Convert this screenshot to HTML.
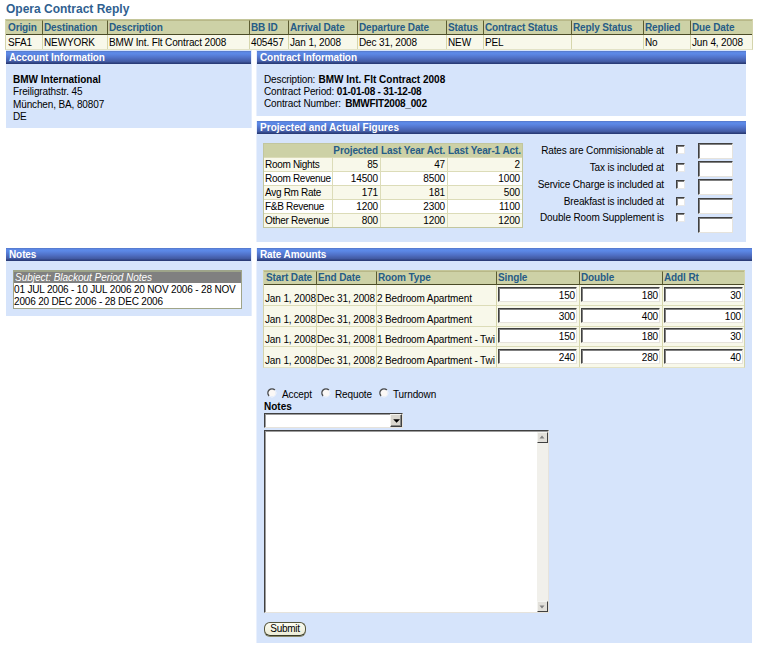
<!DOCTYPE html>
<html><head><meta charset="utf-8">
<style>
html,body{margin:0;padding:0;background:#fff;}
body{width:760px;height:651px;overflow:hidden;position:relative;font-family:"Liberation Sans",Arial,sans-serif;font-size:10px;color:#000;letter-spacing:-0.13px}
.abs{position:absolute;}
#title{left:6px;top:2px;font-size:12px;color:#305f90;white-space:nowrap;line-height:15px;font-weight:bold}
table{border-collapse:separate;border-spacing:0;font-size:10px;}
.ot{position:absolute;table-layout:fixed;border:1px solid #d4d4ac;border-top-color:#c4c69a;border-bottom-color:#e2e2c6}
.ot th{letter-spacing:-0.12px;background:#cdd1a6;color:#265c86;font-weight:bold;text-align:left;padding:0 0 0 1px;border-left:1px solid #5c5c30;border-bottom:1px solid #4a4a26;border-top:1px solid #b8b888;height:13px;line-height:13px;white-space:nowrap;overflow:hidden;box-sizing:content-box}
.ot th:first-child{border-left:0;padding-left:2px}
.ot td{background:#f8f8ea;padding:1px 0 0 1px;border-left:1px solid #d6d6ac;height:13px;line-height:13px;white-space:nowrap;overflow:hidden}
.ot td:first-child{border-left:0;padding-left:2px}
.hd{position:absolute;height:13px;line-height:13px;color:#fff;font-weight:bold;font-size:10px;padding-left:3px;box-sizing:border-box;white-space:nowrap;
background:linear-gradient(#5577c8 0,#5d8bea 14%,#5a84e0 28%,#4f6fc4 55%,#41589f 84%,#2a3c78 93%,#2a3c78 100%);}
.pn{position:absolute;background:#d6e4fb;}
.t{position:absolute;white-space:nowrap;line-height:12px}
b,th,.hd,#title{font-weight:bold;letter-spacing:0}
.hd{letter-spacing:-0.1px}
.inp{position:absolute;box-sizing:border-box;background:#fff;border:1px solid;border-color:#404040 #e6e3dc #e6e3dc #404040;box-shadow:inset 1px 1px 0 #808080;}
.rin{font-size:10px;text-align:right;padding-right:1px;padding-top:1px;line-height:13px;}
.cb{position:absolute;box-sizing:border-box;width:9px;height:9px;background:#fff;border:1px solid;border-color:#404040 #e8e8e8 #e8e8e8 #404040;box-shadow:inset 1px 1px 0 #808080}
.rd{position:absolute;box-sizing:border-box;width:7px;height:7px;border-radius:50%;background:#fff;border:1px solid;border-color:#606060 #e0e0e0 #e0e0e0 #606060;}

.r{text-align:right}
.pt{position:absolute;table-layout:fixed;border:1px solid #c2c69e;background:#f8f8ea}
.pt th{letter-spacing:-0.1px;background:#cdd1a6;color:#265c86;font-weight:bold;text-align:right;padding:0 2px 0 0;height:13px;line-height:13px;white-space:nowrap;border-left:1px solid #cdd1a6}
.pt td{padding:1px 2px 0 0;height:12px;line-height:12px;text-align:right;border-top:1px solid #dcdcb8;border-left:1px solid #dcdcb8;white-space:nowrap}
.pt td.l{text-align:left;padding:1px 0 0 1px;border-left:0;letter-spacing:-0.3px}
.pt tr.a td{background:#f8f8ea}
.pt tr.b td{background:#fff}
.rt th{height:12px;line-height:12px}
.rt td{box-sizing:border-box;height:21px;line-height:12px;vertical-align:bottom;padding:0 0 0 0;border-top:1px solid #dcdcb8;overflow:visible}
.rt td:first-child{padding-left:1px}
.rt tr.s td{height:20px}
.rt tr:nth-child(2) td{border-top:0}
.rt tr:nth-child(4) td.i .inp{top:1px}
.rt td.i{padding:0;vertical-align:top;position:relative}
.rt td.i .inp{position:absolute;left:1px;top:2px;width:79px;height:15px;}
.sb{width:11px;height:11px;box-sizing:border-box;background:#e2e0da;border:1px solid;border-color:#f4f4f0 #404040 #404040 #f4f4f0;}
</style></head><body>
<div id="title" class="abs">Opera Contract Reply</div>

<table class="ot" style="left:5px;top:19px;width:748px">
<colgroup><col style="width:36px"><col style="width:65px"><col style="width:142px"><col style="width:39px"><col style="width:69px"><col style="width:89px"><col style="width:37px"><col style="width:88px"><col style="width:72px"><col style="width:47px"><col></colgroup>
<tr><th>Origin</th><th>Destination</th><th>Description</th><th>BB ID</th><th>Arrival Date</th><th>Departure Date</th><th>Status</th><th>Contract Status</th><th>Reply Status</th><th>Replied</th><th>Due Date</th></tr>
<tr><td>SFA1</td><td>NEWYORK</td><td>BMW Int. Flt Contract 2008</td><td>405457</td><td>Jan 1, 2008</td><td>Dec 31, 2008</td><td>NEW</td><td>PEL</td><td></td><td>No</td><td>Jun 4, 2008</td></tr>
</table>

<!-- Account Information -->
<div class="pn" style="left:6px;top:50px;width:245px;height:78px"></div>
<div class="hd" style="left:6px;top:51px;width:245px">Account Information</div>
<div class="t" style="left:13px;top:74px"><b>BMW International</b></div>
<div class="t" style="left:13px;top:86px">Freiligrathstr. 45</div>
<div class="t" style="left:13px;top:99px">München, BA, 80807</div>
<div class="t" style="left:13px;top:111px">DE</div>

<div class="abs" style="left:256px;top:50px;width:1px;height:66px;background:#e9f0fd"></div><div class="abs" style="left:256px;top:121px;width:1px;height:121px;background:#e9f0fd"></div><div class="abs" style="left:256px;top:248px;width:1px;height:395px;background:#e9f0fd"></div>
<div class="abs" style="left:251px;top:50px;width:1px;height:78px;background:#e4edfc"></div><div class="abs" style="left:251px;top:248px;width:1px;height:68px;background:#e4edfc"></div>
<!-- Contract Information -->
<div class="pn" style="left:257px;top:50px;width:489px;height:66px"></div>
<div class="hd" style="left:257px;top:51px;width:489px">Contract Information</div>
<div class="t" style="left:264px;top:74px">Description:&nbsp; <b style="margin-left:-2px">BMW Int. Flt Contract 2008</b></div>
<div class="t" style="left:264px;top:86px">Contract Period: <b style="letter-spacing:-0.23px">01-01-08 - 31-12-08</b></div>
<div class="t" style="left:264px;top:98px">Contract Number:&nbsp; <b style="letter-spacing:-0.2px;margin-left:-1px">BMWFIT2008_002</b></div>

<!-- Projected -->
<div class="pn" style="left:257px;top:121px;width:489px;height:121px"></div>
<div class="hd" style="left:257px;top:121px;width:489px;letter-spacing:0.035px">Projected and Actual Figures</div>
<table class="pt" style="left:263px;top:143px;width:260px">
<colgroup><col style="width:68px"><col style="width:48px"><col style="width:67px"><col></colgroup>
<tr><th></th><th>Projected</th><th>Last Year Act.</th><th>Last Year-1 Act.</th></tr>
<tr class="a"><td class="l">Room Nights</td><td>85</td><td>47</td><td>2</td></tr>
<tr class="b"><td class="l">Room Revenue</td><td>14500</td><td>8500</td><td>1000</td></tr>
<tr class="a"><td class="l">Avg Rm Rate</td><td>171</td><td>181</td><td>500</td></tr>
<tr class="b"><td class="l">F&amp;B Revenue</td><td>1200</td><td>2300</td><td>1100</td></tr>
<tr class="a"><td class="l">Other Revenue</td><td>800</td><td>1200</td><td>1200</td></tr>
</table>
<div class="t r" style="left:530px;width:134px;top:145px">Rates are Commisionable at</div>
<div class="t r" style="left:530px;width:134px;top:162px">Tax is included at</div>
<div class="t r" style="left:530px;width:134px;top:179px">Service Charge is included at</div>
<div class="t r" style="left:530px;width:134px;top:196px">Breakfast is included at</div>
<div class="t r" style="left:530px;width:134px;top:212px">Double Room Supplement is</div>
<div class="cb" style="left:676px;top:145px"></div>
<div class="cb" style="left:676px;top:163px"></div>
<div class="cb" style="left:676px;top:180px"></div>
<div class="cb" style="left:676px;top:197px"></div>
<div class="cb" style="left:676px;top:213px"></div>
<div class="inp" style="left:698px;top:143px;width:35px;height:16px"></div>
<div class="inp" style="left:698px;top:161px;width:35px;height:16px"></div>
<div class="inp" style="left:698px;top:179px;width:35px;height:16px"></div>
<div class="inp" style="left:698px;top:198px;width:35px;height:16px"></div>
<div class="inp" style="left:698px;top:217px;width:35px;height:16px"></div>

<!-- Notes -->
<div class="pn" style="left:6px;top:248px;width:245px;height:68px"></div>
<div class="hd" style="left:6px;top:248px;width:245px">Notes</div>
<div class="abs" style="left:13px;top:270px;width:229px;height:39px;box-sizing:border-box;border:1px solid #a0a488;border-top:2px solid #9ea48a;background:#fff;line-height:12px">
<div style="background:#808080;color:#fff;font-style:italic;height:11px;line-height:11px;padding-left:1px;white-space:nowrap;letter-spacing:-0.03px">Subject: Blackout Period Notes</div>
<div style="padding-left:0px;padding-top:1px;line-height:12px;letter-spacing:-0.17px">01 JUL 2006 - 10 JUL 2006 20 NOV 2006 - 28 NOV<br>2006 20 DEC 2006 - 28 DEC 2006</div>
</div>

<!-- Rate amounts -->
<div class="pn" style="left:257px;top:248px;width:495px;height:395px"></div>
<div class="hd" style="left:257px;top:248px;width:495px">Rate Amounts</div>
<table class="ot rt" style="left:263px;top:270px;width:482px">
<colgroup><col style="width:52px"><col style="width:60px"><col style="width:120px"><col style="width:83px"><col style="width:83px"><col></colgroup>
<tr><th>Start Date</th><th>End Date</th><th>Room Type</th><th>Single</th><th>Double</th><th>Addl Rt</th></tr>
<tr class="s"><td>Jan 1, 2008</td><td>Dec 31, 2008</td><td>2 Bedroom Apartment</td><td class="i"><div class="inp rin">150</div></td><td class="i"><div class="inp rin">180</div></td><td class="i"><div class="inp rin">30</div></td></tr>
<tr><td>Jan 1, 2008</td><td>Dec 31, 2008</td><td>3 Bedroom Apartment</td><td class="i"><div class="inp rin">300</div></td><td class="i"><div class="inp rin">400</div></td><td class="i"><div class="inp rin">100</div></td></tr>
<tr class="s"><td>Jan 1, 2008</td><td>Dec 31, 2008</td><td>1 Bedroom Apartment - Twi</td><td class="i"><div class="inp rin">150</div></td><td class="i"><div class="inp rin">180</div></td><td class="i"><div class="inp rin">30</div></td></tr>
<tr><td>Jan 1, 2008</td><td>Dec 31, 2008</td><td>2 Bedroom Apartment - Twi</td><td class="i"><div class="inp rin">240</div></td><td class="i"><div class="inp rin">280</div></td><td class="i"><div class="inp rin">40</div></td></tr>
</table>
<svg class="abs" style="left:267px;top:388.2px" width="10" height="10" viewBox="0 0 10 10"><circle cx="5" cy="5" r="3.6" fill="#fbf8f6"/><path d="M2.1 7.9A4.1 4.1 0 0 1 7.9 2.1" fill="none" stroke="#4a4a4a" stroke-width="1.4"/><path d="M7.9 2.1A4.1 4.1 0 0 1 2.1 7.9" fill="none" stroke="#eef2fa" stroke-width="1"/></svg><div class="t" style="left:282px;top:389px">Accept</div>
<svg class="abs" style="left:320.5px;top:388.2px" width="10" height="10" viewBox="0 0 10 10"><circle cx="5" cy="5" r="3.6" fill="#fbf8f6"/><path d="M2.1 7.9A4.1 4.1 0 0 1 7.9 2.1" fill="none" stroke="#4a4a4a" stroke-width="1.4"/><path d="M7.9 2.1A4.1 4.1 0 0 1 2.1 7.9" fill="none" stroke="#eef2fa" stroke-width="1"/></svg><div class="t" style="left:335px;top:389px">Requote</div>
<svg class="abs" style="left:379px;top:388.2px" width="10" height="10" viewBox="0 0 10 10"><circle cx="5" cy="5" r="3.6" fill="#fbf8f6"/><path d="M2.1 7.9A4.1 4.1 0 0 1 7.9 2.1" fill="none" stroke="#4a4a4a" stroke-width="1.4"/><path d="M7.9 2.1A4.1 4.1 0 0 1 2.1 7.9" fill="none" stroke="#eef2fa" stroke-width="1"/></svg><div class="t" style="left:393px;top:389px">Turndown</div>
<div class="t" style="left:264px;top:401px"><b>Notes</b></div>
<div class="inp" style="left:264px;top:413px;width:139px;height:15px;box-shadow:inset 1px 1px 0 #9c9c9c"></div>
<div class="abs" style="left:390px;top:414px;width:12px;height:13px;box-sizing:border-box;background:#dad7cf;border:1px solid;border-color:#f4f3ee #404040 #404040 #f4f3ee;box-shadow:inset -1px -1px 0 #8a8a86"></div>
<svg class="abs" style="left:392.6px;top:418.8px" width="8" height="5" viewBox="0 0 8 5"><path d="M0.2 0.2h6.8l-3.4 3.5z" fill="#000"/></svg>
<!-- textarea -->
<div class="inp" style="left:264px;top:430px;width:285px;height:183px;box-shadow:inset 1px 1px 0 #9c9c9c"></div>
<div class="abs" style="left:537px;top:432px;width:11px;height:180px;background:#f1f0eb"></div>
<div class="abs sb" style="left:537px;top:432px"></div>
<svg class="abs" style="left:539px;top:435px" width="7" height="4"><path d="M0.5 3.5l2.5 -3l2.5 3z" fill="#808080"/></svg>
<div class="abs sb" style="left:537px;top:601px"></div>
<svg class="abs" style="left:539px;top:605px" width="7" height="4"><path d="M0.5 0.5h5l-2.5 3z" fill="#808080"/></svg>
<div class="abs" style="left:264px;top:622px;width:42px;height:14px;box-sizing:border-box;border:1px solid #55553a;border-bottom-color:#3a3a28;border-radius:6px;background:linear-gradient(#fbfbf0,#ececd8);text-align:center;line-height:12px;font-size:10px;letter-spacing:-0.3px;box-shadow:0 1px 0 #8a8a6a">Submit</div>

</body></html>
